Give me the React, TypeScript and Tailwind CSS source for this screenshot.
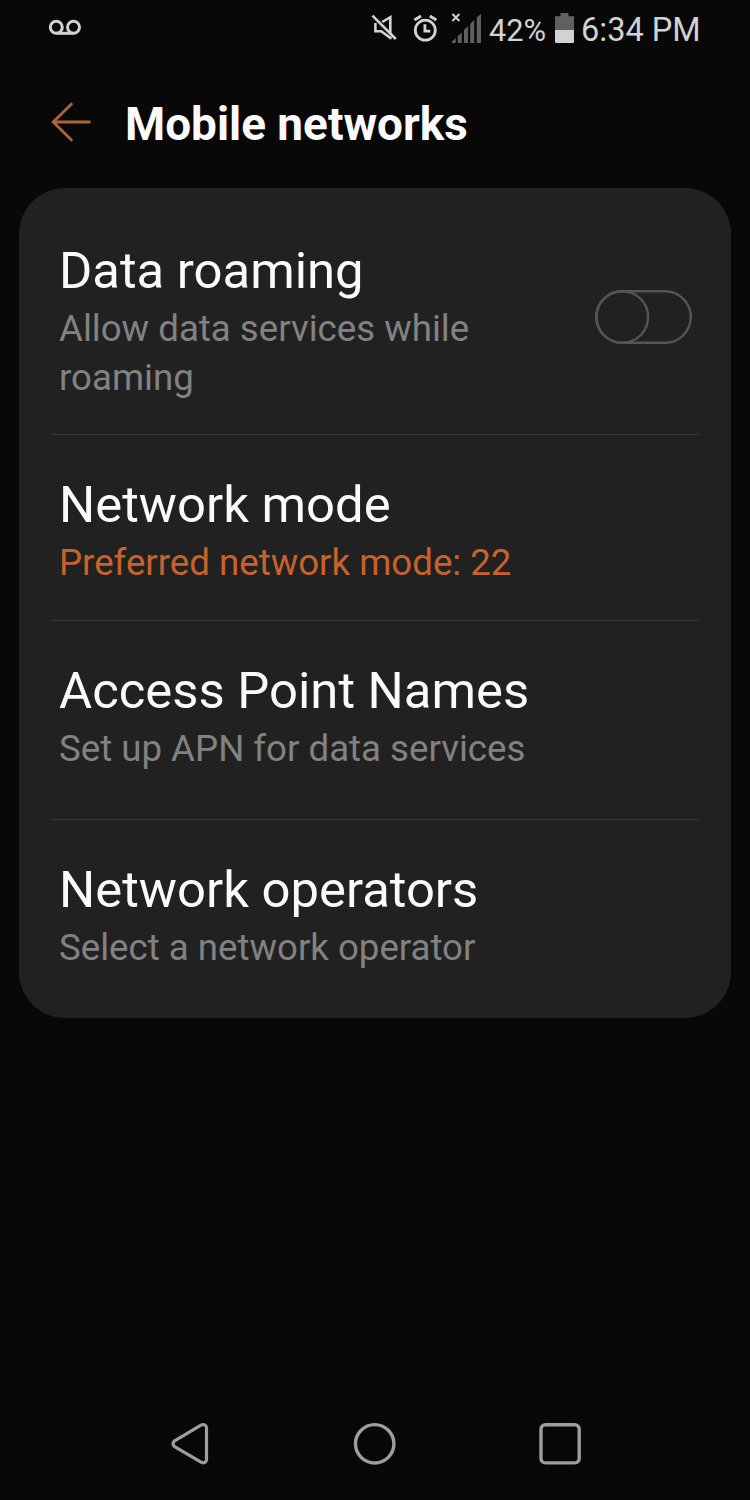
type RowProps = {
  title: string;
  summary: string;
  className: string;
  summaryClass: string;
  toggle?: boolean;
};

function Toggle() {
  return (
    <svg className="mt-[49px] h-[54px] w-[97px] shrink-0" viewBox="0 0 97 54" fill="none" stroke="#555" strokeWidth="2.4">
      <rect x="1.2" y="1.2" width="94.6" height="51.6" rx="25.8" />
      <circle cx="27.3" cy="27" r="25.8" />
    </svg>
  );
}

function Row({ title, summary, className, summaryClass, toggle }: RowProps) {
  return (
    <div className={`mx-8 flex justify-between border-[#363636] pr-[7px] pl-[8px] ${className}`}>
      <div className="w-[520px]">
        <h2 className="mb-[3px] text-[50.8px] leading-[60px] whitespace-nowrap text-[#fafafa]">{title}</h2>
        <p className={`text-[36.65px] leading-[49px] ${summaryClass}`}>{summary}</p>
      </div>
      {toggle && <Toggle />}
    </div>
  );
}

function StatusBar() {
  return (
    <div className="flex h-14 items-start pr-[50px] pl-[48px] leading-[38px] text-[#d2d2d2]">
      <svg className="mt-[19px] h-[17px] w-[34px]" viewBox="0 0 34 17" fill="none" stroke="#d2d2d2" strokeWidth="3">
        <circle cx="8.3" cy="8.2" r="6" />
        <circle cx="25.5" cy="8.2" r="6" />
        <path d="M8.3 14.3H25.5" />
      </svg>
      <div className="flex-1" />
      <svg className="mt-[14px] mr-[16px] h-[28px] w-[26px]" viewBox="0 0 26 28" fill="none" stroke="#d2d2d2" strokeWidth="2.6">
        <path d="M1.4 1.6L24.8 25" />
        <path d="M11.2 8L19.3 3.2V19.4" />
        <path d="M4.4 9V17.2H10.2L20.4 24.6" />
      </svg>
      <svg className="mt-[14px] mr-[13px] h-[29px] w-[25px]" viewBox="0 0 25 29" fill="none" stroke="#d2d2d2" strokeWidth="2.8">
        <circle cx="12.3" cy="16.2" r="10" />
        <path d="M1.4 6L8 2M23.4 6L16.8 2" strokeWidth="3" />
        <path d="M11.9 10.2V17.1H17.3" />
      </svg>
      <svg className="mt-[12px] mr-[7px] h-[32px] w-[31px]" viewBox="0 0 31 32">
        <path d="M1.4 2L8.4 9M8.4 2L1.4 9" stroke="#d2d2d2" strokeWidth="2" />
        <g fill="#606060">
          <path d="M1 31V29.5L4.7 26V31Z" />
          <path d="M6.7 31V24.3L10.7 20.5V31Z" />
          <path d="M13 31V18L17 14.2V31Z" />
          <path d="M19.2 31V12L23.2 8V31Z" />
          <path d="M25.8 31V5.5L30 1.8V31Z" />
        </g>
      </svg>
      <span className="mt-[12px] w-[57px] text-[30.8px] whitespace-nowrap">42%</span>
      <svg className="mt-[13px] mr-[7px] ml-[9px] h-[30px] w-[19px]" viewBox="0 0 19 30">
        <path d="M0 17V3.2H5.5V0H13.5V3.2H19V17Z" fill="#606060" />
        <path d="M0 17H19V28.5Q19 30 17.5 30H1.5Q0 30 0 28.5Z" fill="#d2d2d2" />
      </svg>
      <span className="mt-[11px] w-[119px] text-[32.5px] whitespace-nowrap">6:34 PM</span>
    </div>
  );
}

export default function App() {
  return (
    <div className="flex h-[1500px] w-[750px] flex-col bg-[#080808] font-['Roboto',sans-serif]">
      <StatusBar />
      <header className="flex h-[132px] items-start pl-[51px]">
        <svg className="mt-[46px] h-[40px] w-[40px]" viewBox="0 0 40 40" fill="none" stroke="#b0623a" strokeWidth="2.8">
          <path d="M39.5 20H2M21.2 1.2L2.2 20L21.2 38.8" />
        </svg>
        <h1 className="mt-[40px] ml-[34px] text-[45.9px] leading-[56px] font-bold whitespace-nowrap text-[#fafafa]">Mobile networks</h1>
      </header>
      <main className="mx-[19px] rounded-[46px] bg-[#212121]">
        <Row title="Data roaming" summary="Allow data services while roaming" className="border-b pt-[53px] pb-8" summaryClass="w-[440px] text-[#828282]" toggle />
        <Row title="Network mode" summary="Preferred network mode: 22" className="border-b pt-10 pb-[33px]" summaryClass="text-[#c8622c]" />
        <Row title="Access Point Names" summary="Set up APN for data services" className="border-b pt-10 pb-[46px]" summaryClass="text-[#828282]" />
        <Row title="Network operators" summary="Select a network operator" className="pt-10 pb-[46px]" summaryClass="text-[#828282]" />
      </main>
      <nav className="mt-auto flex h-[80px] items-start justify-between pr-[168px] pl-[170px]">
        <svg className="mt-[2px] h-[44px] w-[40px]" viewBox="0 0 40 44" fill="none" stroke="#9e9e9e" strokeWidth="3.2" strokeLinejoin="round">
          <path d="M31 3.2L4.6 18.8Q1.4 21.7 4.6 24.7L31 40.2C33.6 41.6 36.5 40.5 36.5 37.4V6C36.5 2.9 33.6 1.8 31 3.2Z" />
        </svg>
        <svg className="mt-[2px] h-[44px] w-[44px]" viewBox="0 0 44 44" fill="none" stroke="#9e9e9e" strokeWidth="3.4">
          <circle cx="22.7" cy="21.8" r="19.2" />
        </svg>
        <svg className="mt-[2px] h-[44px] w-[44px]" viewBox="0 0 44 44" fill="none" stroke="#9e9e9e" strokeWidth="3.4">
          <rect x="3" y="2.7" width="38.2" height="38.2" rx="4.5" />
        </svg>
      </nav>
    </div>
  );
}
